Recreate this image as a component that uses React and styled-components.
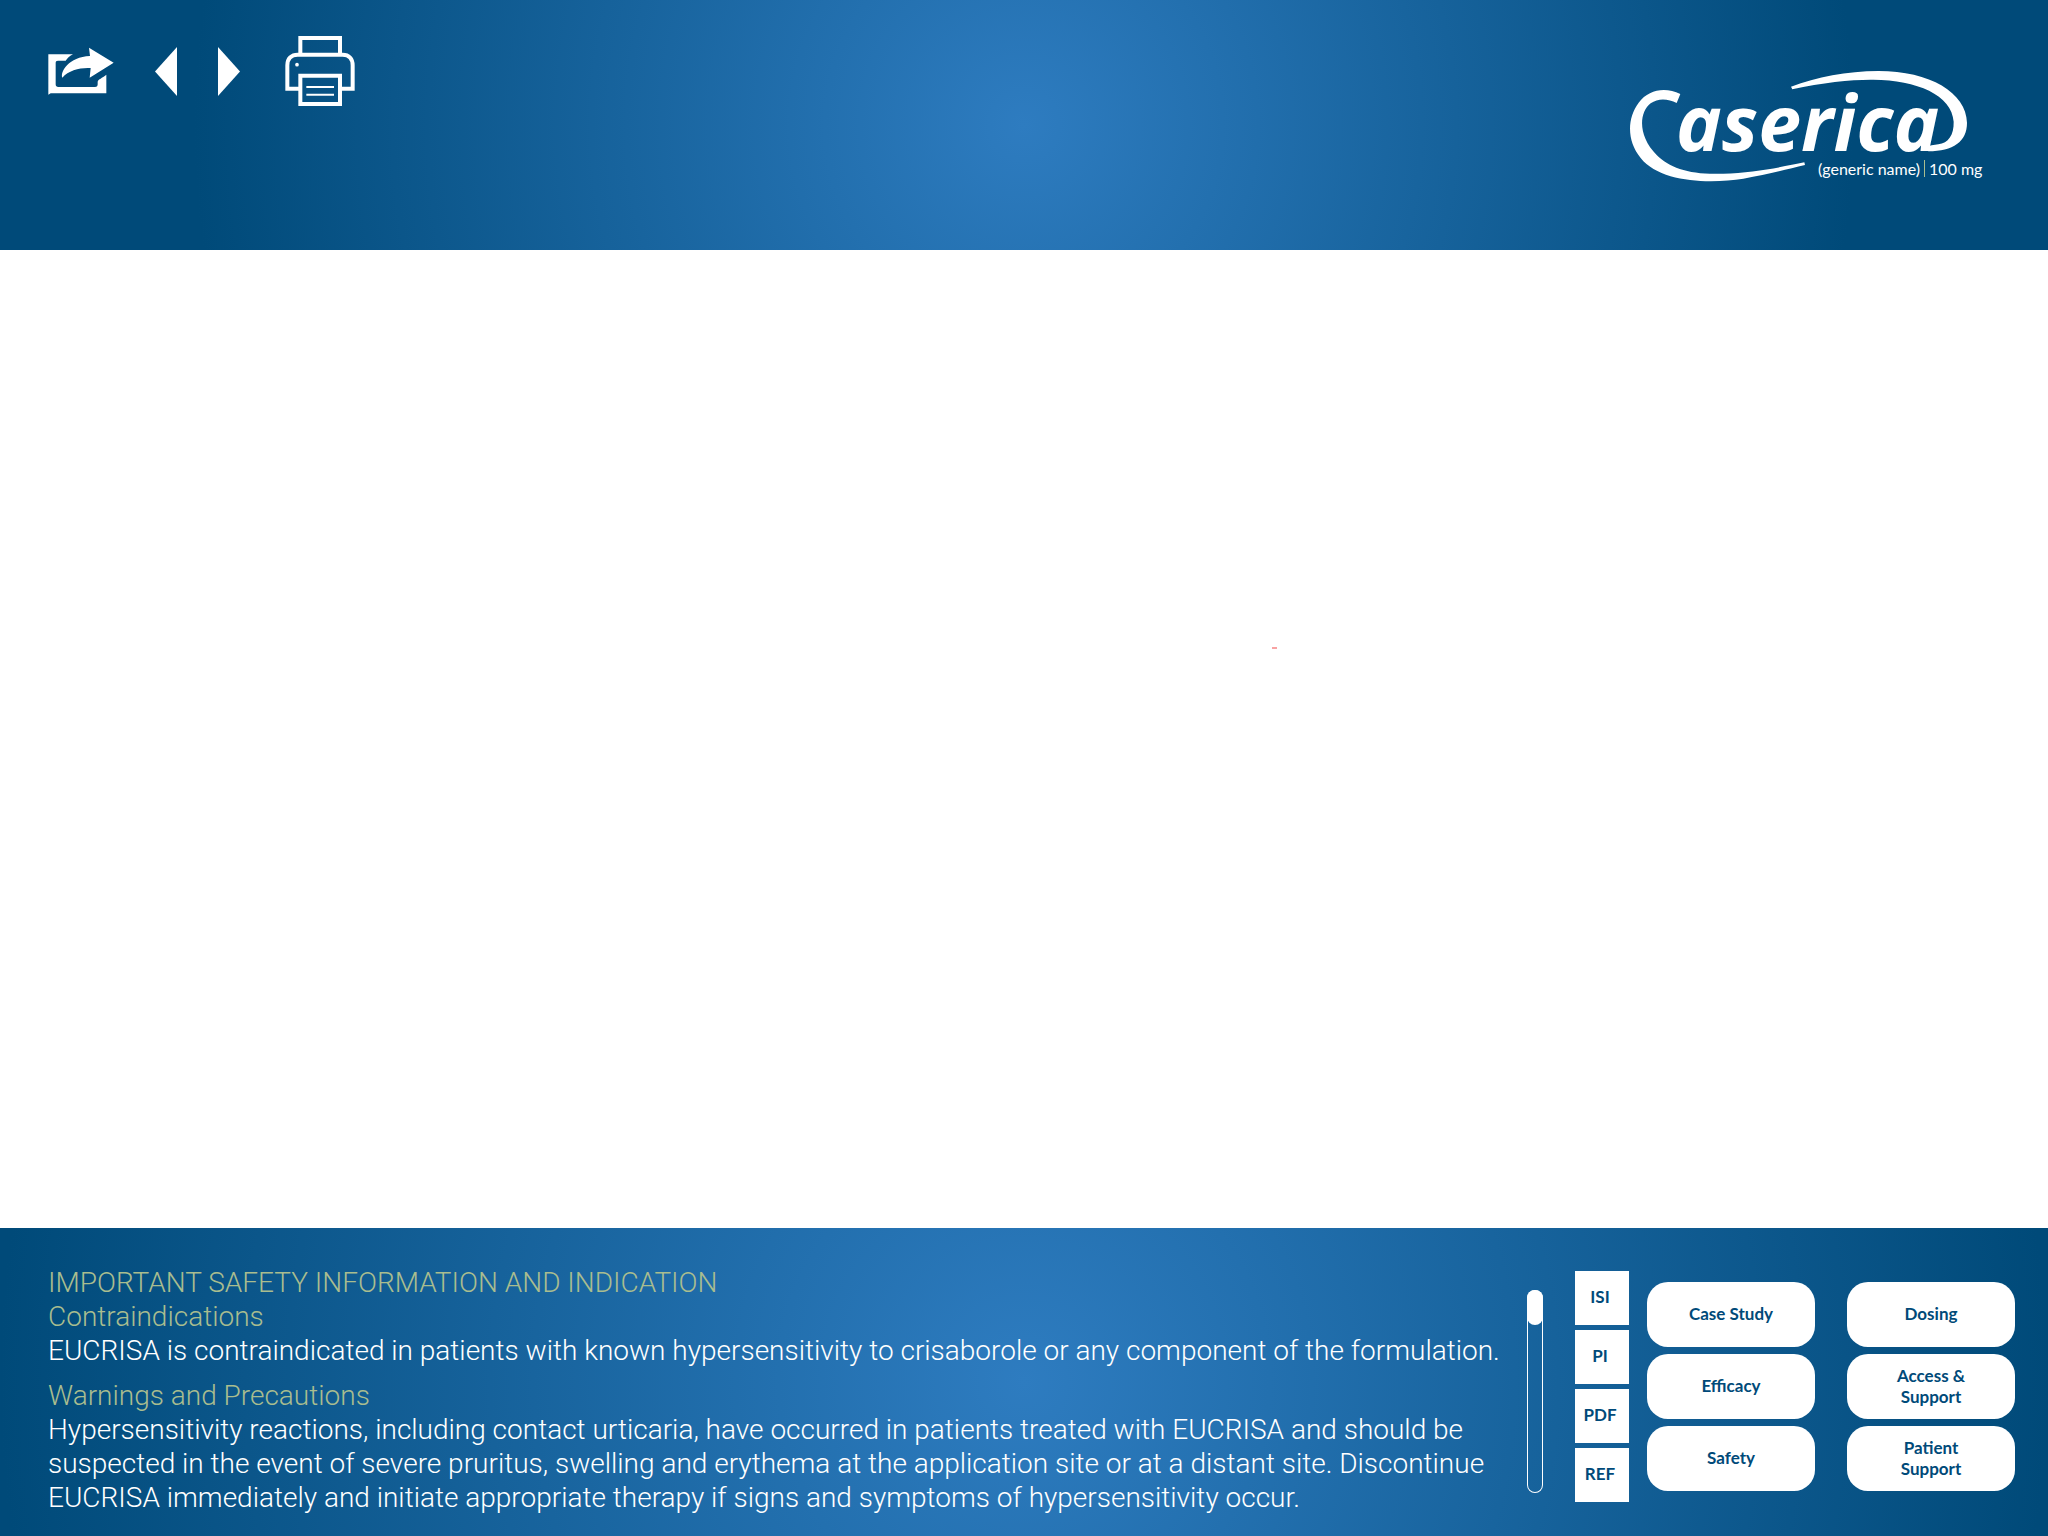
import React from 'react';
import styled, { createGlobalStyle } from 'styled-components';

const GlobalStyle = createGlobalStyle`
  *, *::before, *::after { box-sizing: border-box; }
  body { margin: 0; background: #fff; }
`;

const Page = styled.div`
  display: flex;
  flex-direction: column;
  min-height: 100vh;
  font-family: Roboto, 'Liberation Sans', sans-serif;
  color: #fff;
`;

const Header = styled.header`
  display: flex;
  justify-content: space-between;
  align-items: flex-start;
  min-height: 250px;
  padding: 36px 66px 36px 48px;
  background: radial-gradient(circle 830px at 50% 50%, #2e7cc0, #004a79);
`;

const Toolbar = styled.nav`
  display: flex;
  align-items: center;
  gap: 41px;
`;

const IconButton = styled.button`
  display: block;
  padding: 0 ${({ $inset }) => $inset || 0}px;
  border: 0;
  background: none;
  color: inherit;
  cursor: pointer;

  svg { display: block; }
`;

const Brand = styled.a`
  display: block;
  padding-top: 34px;
  color: inherit;
  text-decoration: none;

  svg { display: block; overflow: visible; }
`;

const Wordmark = styled.text`
  font: italic 700 77px 'Open Sans', 'Noto Sans', sans-serif;
`;

const Strength = styled.text`
  font: 400 16px Lato, sans-serif;
`;

const Canvas = styled.main`
  position: relative;
  flex: 1;
  background: #fff;
`;

const Speck = styled.span`
  position: absolute;
  left: 62.1%;
  top: 40.6%;
  width: 5px;
  height: 2px;
  background: #f8a3a3;
`;

const Footer = styled.footer`
  display: flex;
  align-items: flex-start;
  gap: 14px;
  padding: 38px 33px 21px 48px;
  background: radial-gradient(circle 1024px at 50% 50%, #2e7cc0, #004a79);
`;

const Safety = styled.section`
  flex: 1;
  font-size: 28px;
  font-weight: 300;
  line-height: 34px;
`;

const Heading = styled.h2`
  margin: 0;
  font: inherit;
  color: #a9bd8f;
`;

const Subheading = styled(Heading).attrs({ as: 'h3' })``;

const Copy = styled.p`
  margin: 0;

  & + h3 { margin-top: 11px; }
`;

const Controls = styled.div`
  display: flex;
  align-items: center;
  padding-top: 5px;
`;

const Scroller = styled.input`
  appearance: none;
  writing-mode: vertical-lr;
  width: 16px;
  height: 203px;
  margin: 10px 32px 0 0;
  border-radius: 8px;
  background: transparent;
  box-shadow: inset 0 0 0 1px #fff;
  cursor: pointer;

  &::-webkit-slider-thumb {
    appearance: none;
    width: 16px;
    height: 35px;
    border-radius: 8px;
    background: #fff;
  }
`;

const References = styled.nav`
  display: grid;
  gap: 5px;
  margin-right: 18px;
`;

const Topics = styled.nav`
  display: grid;
  grid-template-columns: repeat(2, 168px);
  gap: 7px 32px;
`;

const NavButton = styled.button`
  padding: 0;
  border: 0;
  background: #fff;
  color: #004a79;
  font: 700 17px/21px Lato, sans-serif;
  cursor: pointer;
`;

const SquareButton = styled(NavButton)`
  width: 54px;
  height: 54px;
  padding: 0 4px 4px 0;
`;

const PillButton = styled(NavButton)`
  height: 65px;
  padding: 0 40px 2px;
  border-radius: 21px;
`;

const ShareIcon = () => (
  <svg width="66" height="48" viewBox="54 76 198 144" fill="currentColor" aria-hidden="true">
    <path d="M55 98 H129 C119 103 113 109 107 117 H84 C79 117 77 119 77 124 V188 C77 194 80 196 85 196 H195 C201 196 203 193 203 188 V180 C205 172 216 170 229 159 V215 H62 L55 219 Z" />
    <path d="M177 78 L251 123 L179 168 L182 139 C152 137 116 145 97 168 C90 150 116 106 180 103 Z" />
  </svg>
);

const ArrowIcon = ({ direction }) => (
  <svg width="22" height="49" viewBox="0 0 22 49" fill="currentColor" aria-hidden="true">
    <path d={direction === 'prev' ? 'M22 0 V49 L0 24.5 Z' : 'M0 0 V49 L22 24.5 Z'} />
  </svg>
);

const PrinterIcon = () => (
  <svg width="70" height="70" viewBox="762 48 210 210" fill="none" stroke="currentColor" strokeWidth="12" aria-hidden="true">
    <path d="M808 104 V54 H927 V104" />
    <path d="M808 206 H769 V136 C769 116 781 104 800 104 H935 C954 104 965 116 965 136 V206 H927" />
    <path d="M808 167 H927 V252 H808 Z" />
    <path d="M826 201 H909 M826 224 H909" strokeWidth="6" />
    <circle cx="798" cy="134" r="5.5" fill="currentColor" stroke="none" />
  </svg>
);

const Logo = () => (
  <svg width="352" height="112" viewBox="0 0 352 112" fill="currentColor" role="img" aria-label="Caserica">
    <g transform="scale(0.33333) translate(-60 -60)">
      <path d="M211 132 C166 110 116 118 86 158 C50 206 51 275 92 324 C150 398 300 402 400 386 C470 374 530 358 585 345 L583 337 C520 350 430 369 340 371 C240 375 180 355 140 315 C85 260 85 190 122 160 C145 143 175 146 200 159 Z" />
      <path d="M543 110 C620 82 710 63 805 63 C960 63 1069 128 1071 218 C1071 275 1030 303 955 304 L940 292 C960 288 972 284 985 283 C1015 279 1032 255 1031 215 C1026 135 920 90 790 89 C730 88 640 97 547 118 Z" />
    </g>
    <Wordmark x="46" y="81">aserica</Wordmark>
    <Strength x="188" y="105">(generic name)</Strength>
    <path d="M294.5 90 V107" stroke="#a9bd8f" />
    <Strength x="299" y="105">100 mg</Strength>
  </svg>
);

const references = ['ISI', 'PI', 'PDF', 'REF'];
const topics = ['Case Study', 'Dosing', 'Efficacy', 'Access & Support', 'Safety', 'Patient Support'];

export default function App() {
  return (
    <Page>
      <GlobalStyle />
      <Header>
        <Toolbar aria-label="Presentation">
          <IconButton type="button" aria-label="Share"><ShareIcon /></IconButton>
          <IconButton type="button" aria-label="Previous"><ArrowIcon direction="prev" /></IconButton>
          <IconButton type="button" aria-label="Next"><ArrowIcon direction="next" /></IconButton>
          <IconButton type="button" aria-label="Print" $inset={4}><PrinterIcon /></IconButton>
        </Toolbar>
        <Brand href="#home"><Logo /></Brand>
      </Header>

      <Canvas><Speck /></Canvas>

      <Footer>
        <Safety>
          <Heading>IMPORTANT SAFETY INFORMATION AND INDICATION</Heading>
          <Subheading>Contraindications</Subheading>
          <Copy>
            EUCRISA is contraindicated in patients with known hypersensitivity to crisaborole or any
            component of the formulation.
          </Copy>
          <Subheading>Warnings and Precautions</Subheading>
          <Copy>
            Hypersensitivity reactions, including contact urticaria, have occurred in patients treated
            with EUCRISA and should be suspected in the event of severe pruritus, swelling and erythema
            at the application site or at a distant site. Discontinue EUCRISA immediately and initiate
            appropriate therapy if signs and symptoms of hypersensitivity occur.
          </Copy>
        </Safety>
        <Controls>
          <Scroller type="range" min="0" max="100" defaultValue="0" aria-label="Scroll safety information" />
          <References aria-label="References">
            {references.map((name) => (
              <SquareButton type="button" key={name}>{name}</SquareButton>
            ))}
          </References>
          <Topics aria-label="Topics">
            {topics.map((name) => (
              <PillButton type="button" key={name}>{name}</PillButton>
            ))}
          </Topics>
        </Controls>
      </Footer>
    </Page>
  );
}
